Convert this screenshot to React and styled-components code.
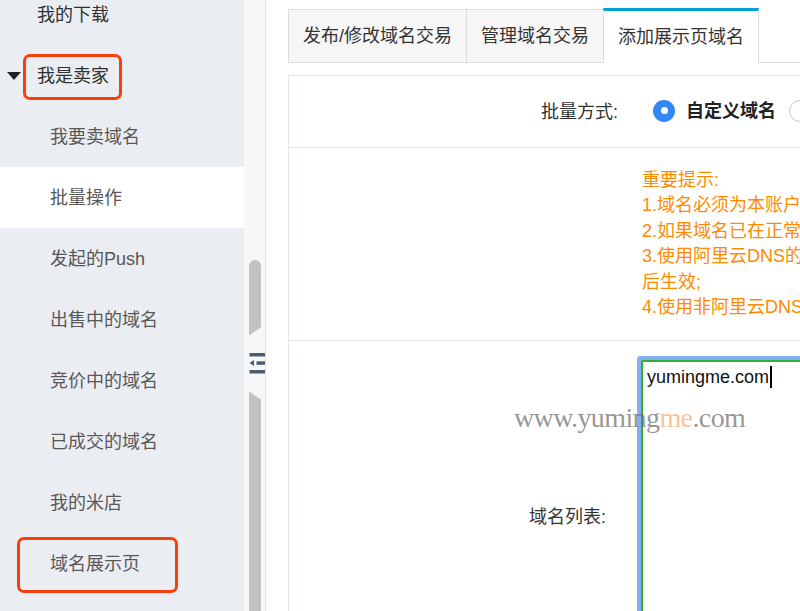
import React from "react";
import styled, { createGlobalStyle } from "styled-components";

const GlobalStyle = createGlobalStyle`
  html, body {
    margin: 0;
    padding: 0;
    overflow: hidden;
    background: #fff;
    font-family: "Liberation Sans", "Noto Sans CJK SC", sans-serif;
  }
`;

const menu = [
  { label: "我的下载" },
  { label: "我是卖家", caret: true, box: { t: -11, r: -13, b: -13, l: -14 } },
  { label: "我要卖域名", sub: true },
  { label: "批量操作", sub: true, active: true },
  { label: "发起的Push", sub: true },
  { label: "出售中的域名", sub: true },
  { label: "竞价中的域名", sub: true },
  { label: "已成交的域名", sub: true },
  { label: "我的米店", sub: true },
  { label: "域名展示页", sub: true, box: { t: -16, r: -38, b: -18, l: -33 } },
];

const tips = [
  "重要提示:",
  "1.域名必须为本账户下的域名；",
  "2.如果域名已在正常展示中，则无需重复添加；",
  "3.使用阿里云DNS的域名，系统将自动设置解析，约10分钟",
  "后生效;",
  "4.使用非阿里云DNS的域名，请手动设置解析；",
];

function App() {
  return (
    <Page>
      <GlobalStyle />
      <Sidebar>
        <NavList>
          {menu.map((item) => (
            <NavItem key={item.label} $sub={item.sub} $active={item.active} $caret={item.caret}>
              {item.caret && (
                <Caret width="14" height="8" viewBox="0 0 14 8">
                  <path d="M0 0 H14 L7 8 Z" fill="#222" />
                </Caret>
              )}
              <ItemText $box={item.box}>{item.label}</ItemText>
            </NavItem>
          ))}
        </NavList>
      </Sidebar>

      <Rail>
        <Thumb />
        <Notch width="21" height="86" viewBox="0 0 21 86">
          <polygon points="3,15 19,4 19,79 3,68" fill="#f7f7f7" />
          <rect x="5.5" y="31" width="15.5" height="3.5" fill="#4b5b70" />
          <path d="M5.5 41 L10 38 L10 44 Z" fill="#4b5b70" />
          <rect x="12.5" y="39.3" width="8.5" height="3.5" fill="#4b5b70" />
          <rect x="5.5" y="48" width="15.5" height="3.5" fill="#4b5b70" />
        </Notch>
      </Rail>

      <Main>
        <TabBar>
          <Tab>发布/修改域名交易</Tab>
          <Tab>管理域名交易</Tab>
          <Tab $active>添加展示页域名</Tab>
        </TabBar>

        <Panel>
          <FormRow $height={71}>
            <Label>批量方式:</Label>
            <RadioGroup>
              <Radio $checked />
              <RadioText>自定义域名</RadioText>
              <Radio />
            </RadioGroup>
          </FormRow>

          <FormRow>
            <div />
            <Tips>
              {tips.map((t) => (
                <TipLine key={t}>{t}</TipLine>
              ))}
            </Tips>
          </FormRow>

          <FormRow $last $pad={19}>
            <Label $gap={36}>域名列表:</Label>
            <TextBox>
              yumingme.com<CaretLine />
            </TextBox>
          </FormRow>
        </Panel>
      </Main>

      <Watermark>
        www.yumin<span className="g">g</span>
        <span className="me">me</span>.com
      </Watermark>
    </Page>
  );
}

export default App;

const Page = styled.div`
  position: relative;
  display: flex;
  height: 100vh;
  overflow: hidden;
`;

const Sidebar = styled.aside`
  width: 244px;
  flex-shrink: 0;
  background-color: #eaedf1;
  overflow: hidden;
`;

const NavList = styled.div`
  display: flex;
  flex-direction: column;
  margin-top: -16px;
`;

const NavItem = styled.div`
  height: 61px;
  display: flex;
  align-items: center;
  padding-left: ${({ $sub, $caret }) => ($caret ? 7 : $sub ? 50 : 37)}px;
  background-color: ${({ $active }) => ($active ? "#fff" : "transparent")};
  color: ${({ $sub }) => ($sub ? "#585858" : "#303030")};
  font-size: 18px;
  flex-shrink: 0;
`;

const Caret = styled.svg`
  margin-right: 16px;
  flex-shrink: 0;
`;

const ItemText = styled.span`
  position: relative;
  display: inline-block;
  line-height: 22px;
  white-space: nowrap;

  ${({ $box }) =>
    $box &&
    `
    &::after {
      content: "";
      position: absolute;
      top: ${$box.t}px;
      right: ${$box.r}px;
      bottom: ${$box.b}px;
      left: ${$box.l}px;
      border: 3px solid #fa3d0b;
      border-radius: 7px;
    }
  `}
`;

const Rail = styled.div`
  position: relative;
  width: 20px;
  flex-shrink: 0;
  background-color: #f7f7f7;
  border-left: 1px solid #fbfbfb;
  border-right: 1px solid #e6e6e6;
`;

const Thumb = styled.div`
  position: absolute;
  left: 4px;
  top: 260px;
  bottom: 0;
  width: 12px;
  background-color: #c2c2c2;
  border-radius: 6px 6px 0 0;
`;

const Notch = styled.svg`
  position: absolute;
  left: -1px;
  top: 322px;
  overflow: visible;
`;

const Main = styled.main`
  flex: 1;
  min-width: 0;
  padding: 8px 0 0 22px;
  overflow: hidden;
`;

const TabBar = styled.div`
  display: flex;
  align-items: flex-end;
  height: 54px;
  border-bottom: 1px solid #dddddd;
  width: 800px;
`;

const Tab = styled.div`
  height: ${({ $active }) => ($active ? 55 : 53)}px;
  margin-bottom: ${({ $active }) => ($active ? -1 : 0)}px;
  margin-left: -1px;
  padding: 0 14px;
  display: flex;
  align-items: center;
  box-sizing: border-box;
  font-size: 18px;
  line-height: 22px;
  color: #333;
  white-space: nowrap;
  background-color: ${({ $active }) => ($active ? "#fff" : "#f6f6f6")};
  border: 1px solid #dcdcdc;
  border-bottom: none;
  border-top: ${({ $active }) => ($active ? "3px solid #00a2d3" : "1px solid #dcdcdc")};

  &:first-child {
    margin-left: 0;
  }
`;

const Panel = styled.section`
  margin-top: 12px;
  width: 720px;
  border: 1px solid #e2e7ed;
`;

const FormRow = styled.div`
  display: grid;
  grid-template-columns: 353px 1fr;
  ${({ $height }) => ($height ? `height: ${$height}px;` : "")}
  padding: ${({ $pad }) => ($pad ? `${$pad}px 0` : "0")};
  border-bottom: ${({ $last }) => ($last ? "none" : "1px solid #e2e7ed")};
`;

const Label = styled.div`
  align-self: center;
  text-align: right;
  padding-right: ${({ $gap }) => $gap || 24}px;
  font-size: 18px;
  line-height: 24px;
  color: #333;
`;

const RadioGroup = styled.div`
  display: flex;
  align-items: center;
  padding-left: 11px;
  margin-top: -2px;
`;

const Radio = styled.span`
  width: 22px;
  height: 22px;
  border-radius: 50%;
  box-sizing: border-box;
  flex-shrink: 0;
  background-color: ${({ $checked }) => ($checked ? "#3387f2" : "#fff")};
  border: ${({ $checked }) => ($checked ? "none" : "1px solid #c8c8c8")};
  display: flex;
  align-items: center;
  justify-content: center;

  &::after {
    content: "";
    display: ${({ $checked }) => ($checked ? "block" : "none")};
    width: 7px;
    height: 7px;
    border-radius: 50%;
    background: #fff;
  }
`;

const RadioText = styled.span`
  margin: 0 13px 0 11px;
  font-size: 18px;
  line-height: 24px;
  font-weight: 700;
  color: #222;
  white-space: nowrap;
`;

const Tips = styled.div`
  padding: 20px 0 20px;
`;

const TipLine = styled.div`
  font-size: 18px;
  line-height: 25.4px;
  color: #ff8a00;
  white-space: nowrap;
`;

const TextBox = styled.div`
  margin-left: -1px;
  width: 420px;
  height: 314px;
  box-sizing: border-box;
  padding: 4px 4px;
  border: 2px solid #2fb12f;
  border-radius: 1px;
  box-shadow: 0 0 0 4px #86aef3;
  font-size: 18px;
  line-height: 22px;
  color: #111;
  white-space: nowrap;
`;

const CaretLine = styled.span`
  display: inline-block;
  width: 2px;
  height: 22px;
  margin-left: 1px;
  vertical-align: top;
  background-color: #000;
`;

const Watermark = styled.div`
  position: absolute;
  left: 514px;
  top: 402px;
  z-index: 5;
  pointer-events: none;
  font-family: "Liberation Serif", serif;
  font-size: 28px;
  line-height: 32px;
  letter-spacing: -0.6px;
  color: rgba(110, 110, 110, 0.72);
  white-space: nowrap;

  .me {
    color: rgba(247, 178, 128, 0.8);
  }
`;
